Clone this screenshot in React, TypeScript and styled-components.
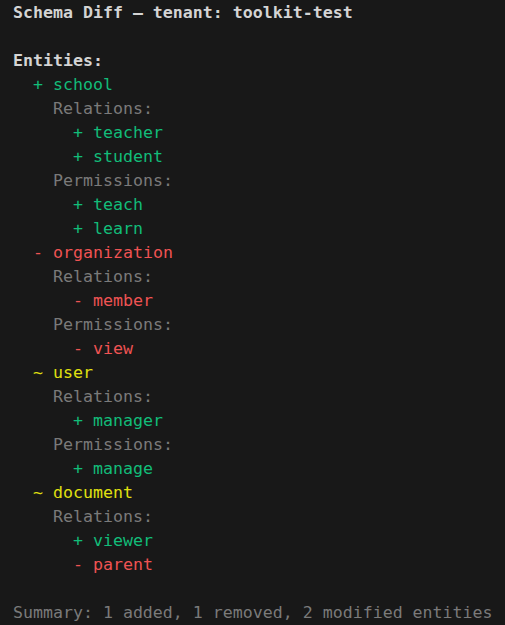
import React from "react";
import styled, { createGlobalStyle } from "styled-components";

const GlobalStyle = createGlobalStyle`
  html, body {
    margin: 0;
    padding: 0;
    background: #181818;
  }
  #root {
    min-height: 625px;
    background: #181818;
  }
`;

type Kind = "add" | "remove" | "modify";

const colors: Record<Kind, string> = {
  add: "#12bc79",
  remove: "#ef5353",
  modify: "#e0e010",
};

const marks: Record<Kind, string> = {
  add: "+",
  remove: "-",
  modify: "~",
};

const Terminal = styled.div`
  font-family: "DejaVu Sans Mono", "Liberation Mono", monospace;
  font-size: 16.6px;
  line-height: 24px;
  color: #cccccc;
  padding: 1px 12px 0 13px;
  display: flex;
  flex-direction: column;
  white-space: pre;
`;

const Title = styled.div`
  font-weight: bold;
  color: #d4d4d4;
`;

const Blank = styled.div`
  height: 24px;
`;

const Heading = styled.div`
  font-weight: bold;
  color: #d4d4d4;
`;

const Line = styled.div<{ $indent: number; $kind?: Kind }>`
  padding-left: ${(p) => p.$indent * 10}px;
  color: ${(p) => (p.$kind ? colors[p.$kind] : "#7a7a7a")};
`;

const Summary = styled.div`
  color: #7a7a7a;
`;

type Entity = {
  name: string;
  kind: Kind;
  relations?: { name: string; kind: Kind }[];
  permissions?: { name: string; kind: Kind }[];
};

const entities: Entity[] = [
  {
    name: "school",
    kind: "add",
    relations: [
      { name: "teacher", kind: "add" },
      { name: "student", kind: "add" },
    ],
    permissions: [
      { name: "teach", kind: "add" },
      { name: "learn", kind: "add" },
    ],
  },
  {
    name: "organization",
    kind: "remove",
    relations: [{ name: "member", kind: "remove" }],
    permissions: [{ name: "view", kind: "remove" }],
  },
  {
    name: "user",
    kind: "modify",
    relations: [{ name: "manager", kind: "add" }],
    permissions: [{ name: "manage", kind: "add" }],
  },
  {
    name: "document",
    kind: "modify",
    relations: [
      { name: "viewer", kind: "add" },
      { name: "parent", kind: "remove" },
    ],
  },
];

function Group({ label, items }: { label: string; items?: { name: string; kind: Kind }[] }) {
  if (!items || items.length === 0) return null;
  return (
    <>
      <Line $indent={4}>{label}:</Line>
      {items.map((it) => (
        <Line key={it.name} $indent={6} $kind={it.kind}>
          {marks[it.kind]} {it.name}
        </Line>
      ))}
    </>
  );
}

export default function App() {
  return (
    <>
      <GlobalStyle />
      <Terminal>
        <Title>Schema Diff — tenant: toolkit-test</Title>
        <Blank />
        <Heading>Entities:</Heading>
        {entities.map((e) => (
          <React.Fragment key={e.name}>
            <Line $indent={2} $kind={e.kind}>
              {marks[e.kind]} {e.name}
            </Line>
            <Group label="Relations" items={e.relations} />
            <Group label="Permissions" items={e.permissions} />
          </React.Fragment>
        ))}
        <Blank />
        <Summary>Summary: 1 added, 1 removed, 2 modified entities</Summary>
      </Terminal>
    </>
  );
}
